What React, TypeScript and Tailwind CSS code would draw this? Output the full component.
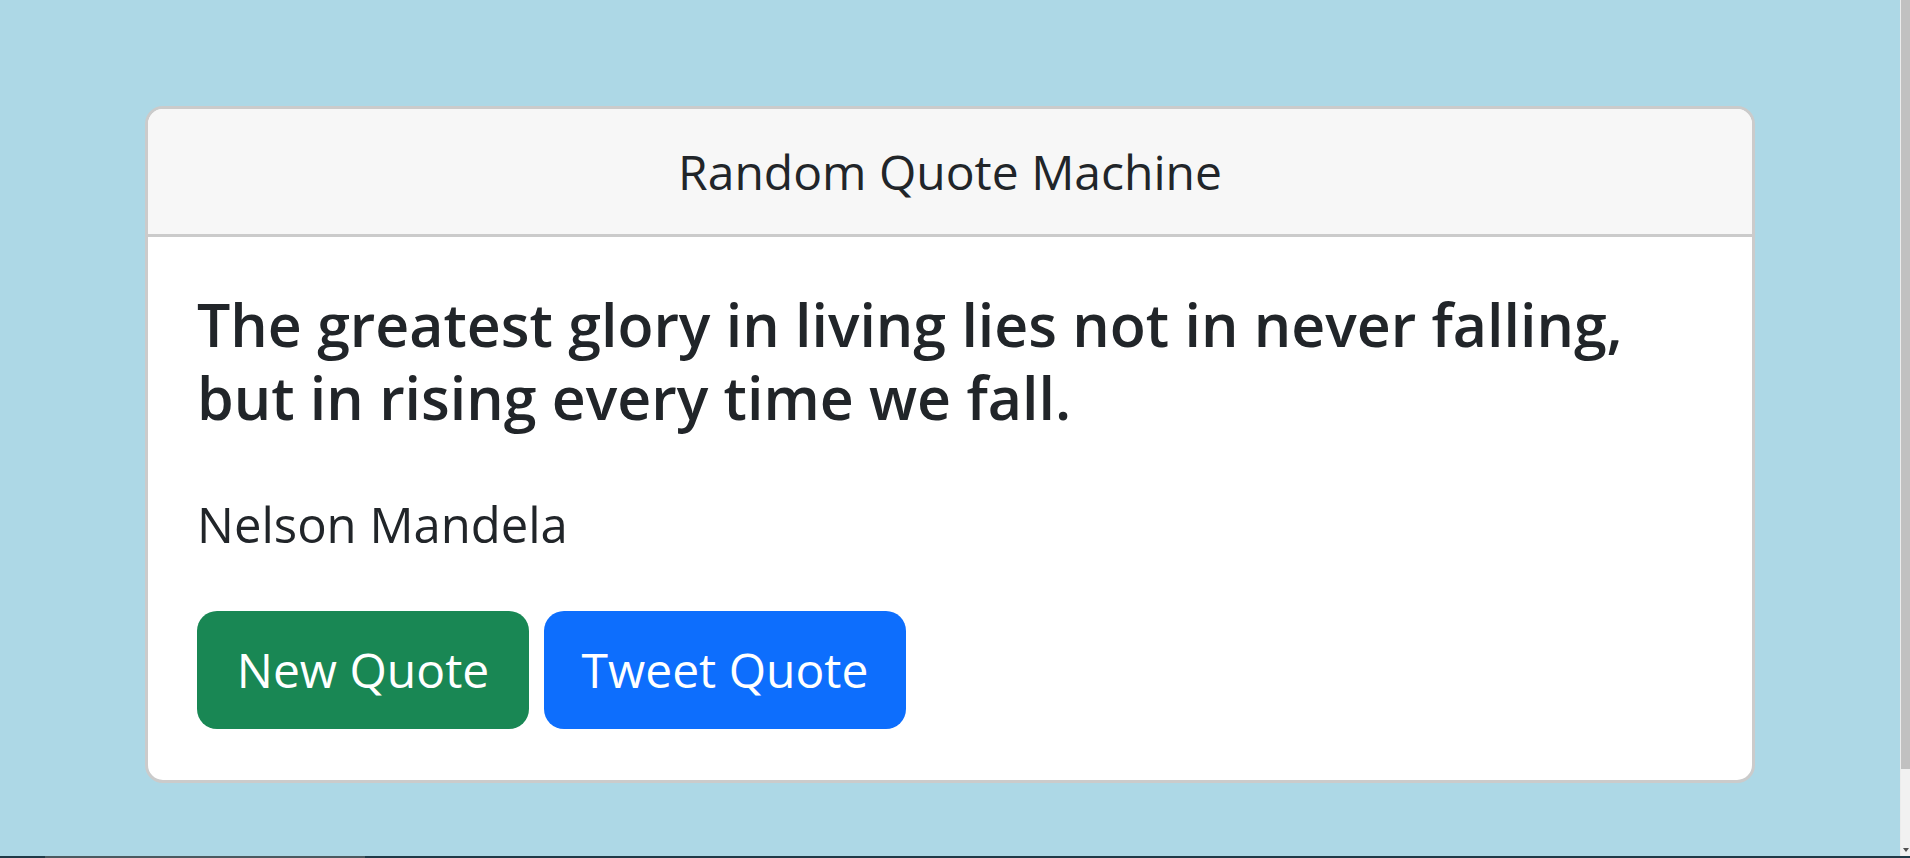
export default function App() {
  return (
    <div className="h-screen flex flex-col bg-[#add8e6] font-['Open_Sans','Noto_Sans',sans-serif] text-[#212529] overflow-hidden">
      <div className="flex flex-1 min-h-0">
        <main className="flex-1 pt-[106px] px-[145px]">
          <div className="rounded-[18px] border-[3px] border-[#cbcbcb] bg-white overflow-hidden">
            <div className="bg-[#f7f7f7] border-b-[3px] border-[#cbcbcb] h-[128px] flex items-center justify-center">
              <h1 className="text-[48px] leading-none">Random Quote Machine</h1>
            </div>
            <div className="px-[49px] pt-[51px] pb-[51px]">
              <h4 className="text-[59px] leading-[73px] font-semibold">
                The greatest glory in living lies not in never falling, but in rising every time we fall.
              </h4>
              <p className="mt-[54px] text-[49px] leading-[72px]">Nelson Mandela</p>
              <div className="mt-[51px] flex gap-[15px]">
                <button className="h-[118px] w-[332px] rounded-[20px] bg-[#198754] text-white text-[48px]">
                  New Quote
                </button>
                <button className="h-[118px] w-[362px] rounded-[20px] bg-[#0d6efd] text-white text-[48px]">
                  Tweet Quote
                </button>
              </div>
            </div>
          </div>
        </main>
        <div className="w-[10px] flex flex-col border-l border-[#ececec]">
          <div className="h-[769px] bg-[#c1c1c1]" />
          <div className="flex-1 bg-[#f1f1f1] flex items-end justify-center pb-[4px]">
            <div className="w-0 h-0 border-l-[3px] border-r-[3px] border-t-[4px] border-l-transparent border-r-transparent border-t-[#505050]" />
          </div>
        </div>
      </div>
      <div className="h-[2px] flex">
        <div className="w-[45px] bg-[#1f3a47]" />
        <div className="w-[320px] bg-[#4a5a60]" />
        <div className="flex-1 bg-[#1f3a47]" />
      </div>
    </div>
  )
}
